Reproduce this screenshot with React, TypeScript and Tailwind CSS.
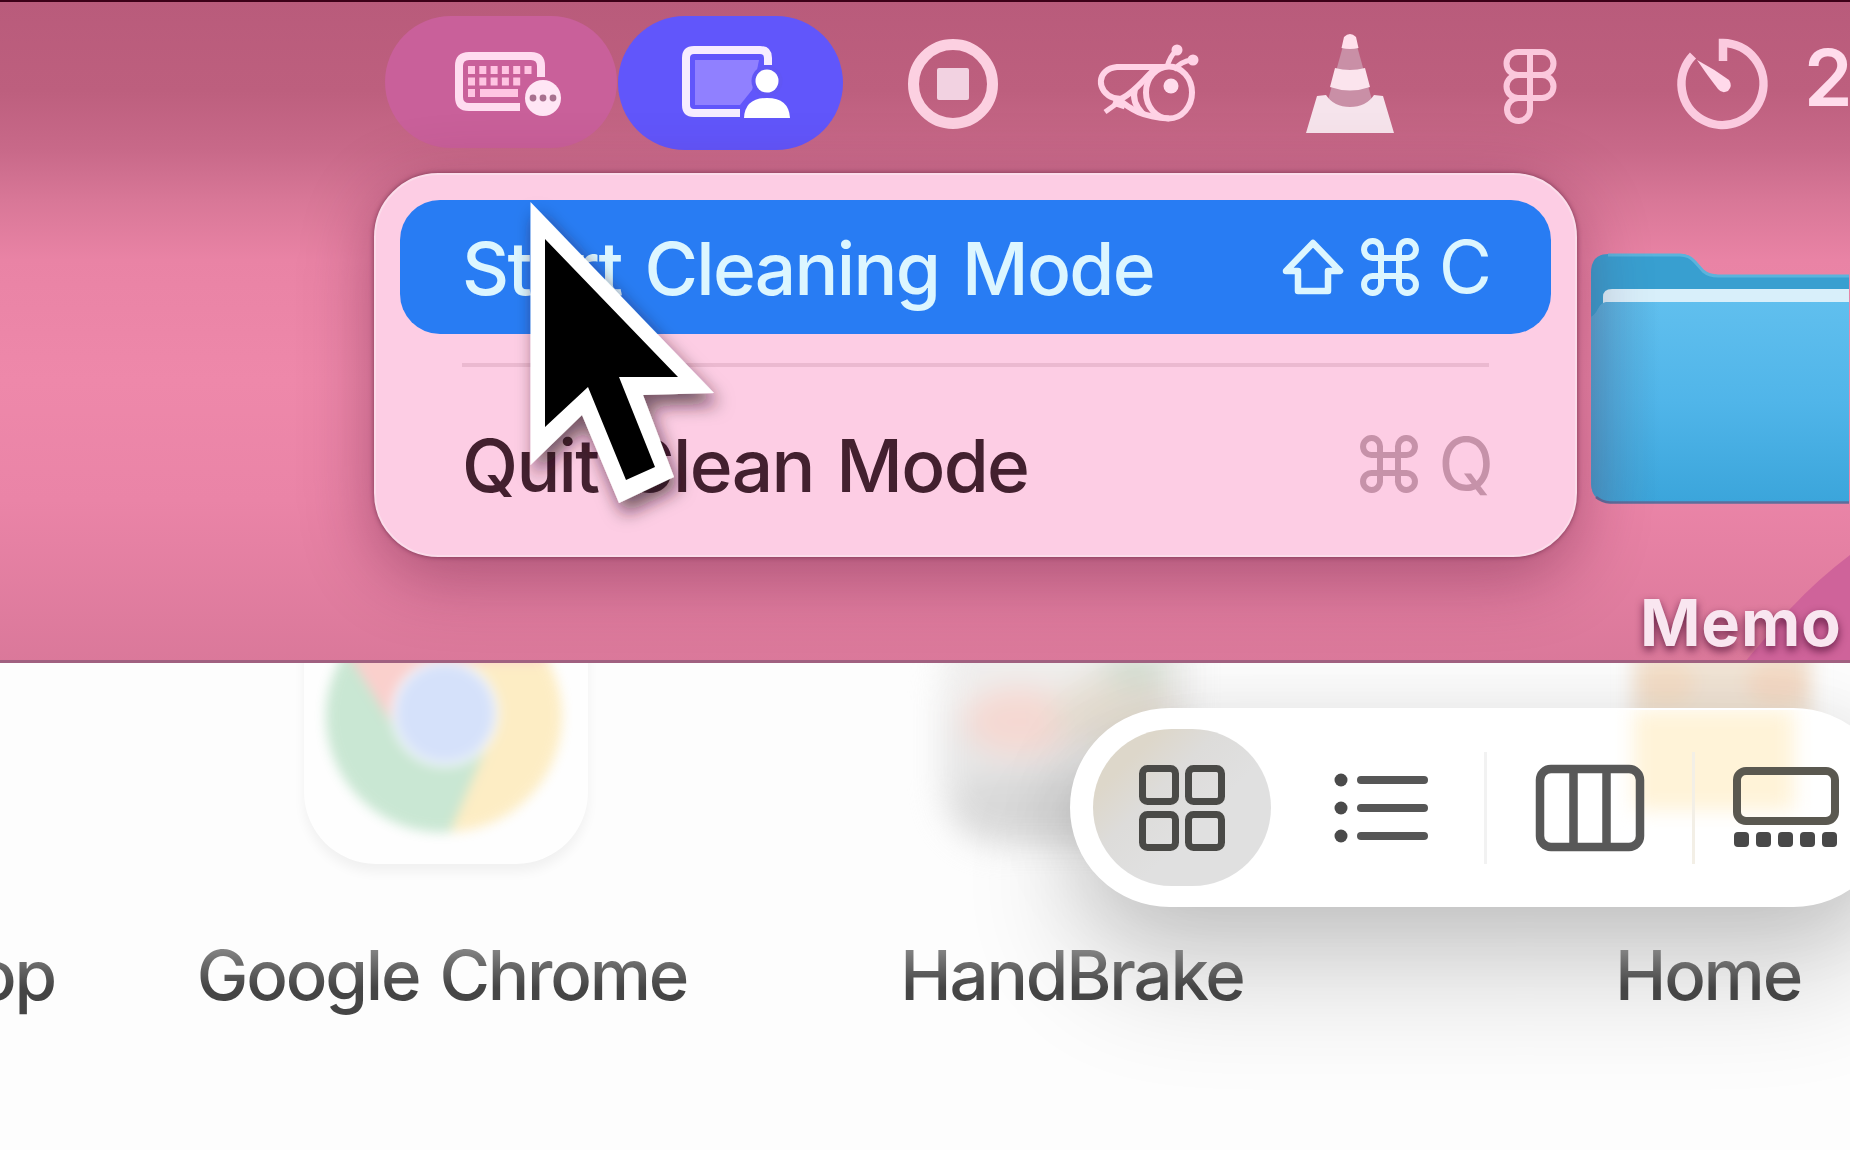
import React from 'react'
import type { ReactNode } from 'react'

function KeyboardIcon() {
  return (
    <svg width="110" height="70" viewBox="0 0 110 70" fill="none">
      <path
        d="M66 56 H15 Q5 56 5 46 V15 Q5 5 15 5 H77 Q87 5 87 15 V26"
        stroke="#ffdcf0"
        strokeWidth="8"
      />
      <g fill="#ffc4e2">
        {[0, 1, 2, 3, 4, 5].map((i) => (
          <rect key={i} x={14 + i * 11.3} y="15" width="7" height="8" />
        ))}
        {[0, 1, 2, 3, 4].map((i) => (
          <rect key={i} x={14 + i * 11.3} y="26.5" width="7" height="8" />
        ))}
        <rect x="14" y="38" width="7" height="8" />
        <rect x="26" y="38" width="38" height="8" />
      </g>
      <circle cx="89" cy="47" r="18" fill="#ffe6f5" />
      <g fill="#a8718f">
        <circle cx="79" cy="47" r="3.4" />
        <circle cx="89" cy="47" r="3.4" />
        <circle cx="99" cy="47" r="3.4" />
      </g>
    </svg>
  )
}

function ScreenShareIcon() {
  return (
    <svg width="112" height="78" viewBox="0 0 112 78" fill="none">
      <path
        d="M60 69 H14 Q6 69 6 61 V14 Q6 6 14 6 H80 Q88 6 88 14 V21"
        stroke="#f6ecff"
        strokeWidth="8"
      />
      <path d="M15 16 H79 L75 36 L72 46 L60 61 H15 Z" fill="#9080ff" />
      <circle cx="87" cy="37" r="15.5" fill="#6156f5" />
      <circle cx="87" cy="37" r="11.5" fill="#fff" />
      <path d="M64 74 Q65 54 87 54 Q109 54 110 74 Z" fill="#fff" />
    </svg>
  )
}

function RecordIcon() {
  return (
    <svg width="92" height="92" viewBox="0 0 92 92" fill="none">
      <circle cx="46" cy="46" r="39.5" stroke="#fcd0e1" strokeWidth="11" />
      <rect x="30" y="30" width="32" height="32" rx="2" fill="#f2d2e1" />
    </svg>
  )
}

function BeeIcon() {
  return (
    <svg width="106" height="84" viewBox="0 0 106 84" fill="none" stroke="#ffd3e6" strokeWidth="6">
      <ellipse cx="72" cy="50.500" rx="23" ry="26" />
      <path d="M68 25 H20 C-1 27 -1 50 17 56 L24 57 C38 50 46 38 57 28" strokeLinejoin="round" />
      <path d="M20 56 C34 68 46 75 72 76.500" />
      <path d="M8 70 L22 60" strokeWidth="5" />
      <path d="M16 60 L28 64" strokeWidth="7" />
      <path d="M38 47 C35 57 40 66 46 72" />
      <path d="M70 25 Q73 14 79 9 M77 28 Q84 19 95 18" strokeWidth="5" />
      <circle cx="80" cy="8" r="5.5" fill="#ffd3e6" stroke="none" />
      <circle cx="96" cy="18" r="5.5" fill="#ffd3e6" stroke="none" />
      <circle cx="74" cy="44" r="7.5" fill="#ffdcec" stroke="none" />
    </svg>
  )
}

function ConeIcon() {
  return (
    <svg width="90" height="104" viewBox="0 0 90 104">
      <path d="M38 14 L52 14 L67 68 Q45 86 23 68 Z" fill="#c98fa6" />
      <path d="M36.500 16 L39 5 Q45 -1 51 5 L53.500 16 Q45 18 36.500 16 Z" fill="#ffe0ec" />
      <path d="M30 36 Q45 40 60 36 L65 55 Q45 62 25 55 Z" fill="#fbe4ed" />
      <path d="M12 64 L21 63 Q29 75 45 75 Q61 75 69 63 L78 64 L89 101 H1 Z" fill="#f6e4ec" />
    </svg>
  )
}

function FigmaIcon() {
  return (
    <svg width="56" height="78" viewBox="0 0 56 78" fill="none" stroke="#fbc8dc" strokeWidth="6">
      <path d="M28 5 H16 A11 11 0 0 0 16 28 H28 M28 28 H16 A11 11 0 0 0 16 51 H28 M28 51 H16 A11.500 11.500 0 1 0 28 62 V5 H40 A11 11 0 0 1 40 28 H28 M40 28 A11 11 0 0 1 40 51 H28" />
    </svg>
  )
}

function TimerIcon() {
  return (
    <svg width="94" height="94" viewBox="0 0 94 94" fill="none">
      <path d="M47 24 V6 A41 41 0 1 1 17 18.500" stroke="#fbcadf" strokeWidth="8.500" />
      <path d="M21 23 Q38 32 53 43 Q57 49 52 54 Q46 57 42 52 Q31 38 21 23 Z" fill="#ffd9ea" />
    </svg>
  )
}

function ShiftIcon() {
  return (
    <svg width="64" height="58" viewBox="0 0 64 58" fill="none">
      <path
        d="M32 5 L59 33 H47 V53 H17 V33 H5 Z"
        stroke="currentColor"
        strokeWidth="6.5"
        strokeLinejoin="round"
      />
    </svg>
  )
}

function CommandIcon() {
  return (
    <svg width="58" height="58" viewBox="0 0 58 58" fill="none">
      <path
        d="M20 20 V12.500 A8.500 8.500 0 1 0 12.500 20 H45.500 A8.500 8.500 0 1 0 38 12.500 V45.500 A8.500 8.500 0 1 0 45.500 38 H12.500 A8.500 8.500 0 1 0 20 45.500 Z"
        stroke="currentColor"
        strokeWidth="6"
      />
    </svg>
  )
}

function FolderIcon() {
  return (
    <svg width="259" height="256" viewBox="0 0 259 256">
      <defs>
        <linearGradient id="folder-front" x1="0" y1="0" x2="0" y2="1">
          <stop offset="0" stopColor="#60bfee" />
          <stop offset="0.5" stopColor="#50b5e9" />
          <stop offset="1" stopColor="#3ba5db" />
        </linearGradient>
        <linearGradient id="folder-side" x1="0" y1="0" x2="1" y2="0">
          <stop offset="0" stopColor="#4a94bf" stopOpacity="0.5" />
          <stop offset="1" stopColor="#4a94bf" stopOpacity="0" />
        </linearGradient>
      </defs>
      <path d="M1 66 V22 Q1 3 18 3 H90 Q99 3 105 10 L113 19 Q119 24 128 24 H259 V66 Z" fill="#389fd0" />
      <path d="M18 4 H90 Q99 4 105 11 L113 20 Q119 25 128 25 H259" fill="none" stroke="#5bb3dc" strokeWidth="3" />
      <path d="M13 56 V46 Q13 38 22 38 H259 V56 Z" fill="#d8effa" />
      <path d="M16 51 H259 V251 H20 Q2 251 1 233 V66 Q5 64 8 58 Q11 52 16 51 Z" fill="url(#folder-front)" />
      <path d="M16 51 H70 V251 H20 Q2 251 1 233 V66 Q5 64 8 58 Q11 52 16 51 Z" fill="url(#folder-side)" />
      <path d="M6 246 Q12 251 20 251.500 H259" fill="none" stroke="#5c6d9c" strokeWidth="2.500" />
    </svg>
  )
}

function ChromeIcon() {
  return (
    <svg width="240" height="240" viewBox="0 0 240 240" className="opacity-25 blur-[6px]">
      <circle cx="120" cy="120" r="116" fill="#fbbc1c" />
      <path d="M20 55 A116 116 0 0 1 222 66 H119 L80 150 Z" fill="#f2493d" />
      <path d="M20 55 L80 150 L165 140 L124 236 A116 116 0 0 1 20 55 Z" fill="#2fa455" />
      <circle cx="119" cy="117" r="54" fill="#dfe8fa" />
      <circle cx="119" cy="117" r="49" fill="#5f8ef0" />
    </svg>
  )
}

function HandBrakeIcon() {
  return (
    <svg width="300" height="260" viewBox="0 0 300 260" className="-mt-7 overflow-visible opacity-80 blur-[15px]">
      <rect x="18" y="0" width="250" height="212" rx="60" fill="#e2e2e2" />
      <rect x="22" y="0" width="250" height="85" fill="#ecebea" />
      <ellipse cx="98" cy="86" rx="56" ry="34" fill="#f4d0c8" />
      <ellipse cx="190" cy="76" rx="60" ry="36" fill="#e2d9cb" />
      <ellipse cx="214" cy="34" rx="34" ry="16" fill="#c6d4c4" />
      <rect x="35" y="140" width="215" height="62" rx="30" fill="#d2d2d2" />
    </svg>
  )
}

function HomeIcon() {
  return (
    <svg width="260" height="60" viewBox="0 0 260 60" className="ml-7 overflow-visible blur-[9px]">
      <rect x="40" y="-30" width="180" height="100" fill="#f2e5d6" />
      <ellipse cx="75" cy="20" rx="28" ry="22" fill="#f5dfc8" />
      <ellipse cx="185" cy="20" rx="30" ry="22" fill="#f5dbc6" />
    </svg>
  )
}

function GridViewIcon() {
  return (
    <svg width="88" height="88" viewBox="0 0 88 88" fill="none" stroke="#4a4a47" strokeWidth="7">
      <rect x="4.500" y="4.500" width="33" height="33" rx="5" />
      <rect x="50.500" y="4.500" width="33" height="33" rx="5" />
      <rect x="4.500" y="50.500" width="33" height="33" rx="5" />
      <rect x="50.500" y="50.500" width="33" height="33" rx="5" />
    </svg>
  )
}

function ListViewIcon() {
  return (
    <svg width="98" height="72" viewBox="0 0 98 72" stroke="#565656" strokeWidth="8" strokeLinecap="round">
      {[8, 36, 64].map((y) => (
        <g key={y}>
          <circle cx="8" cy={y} r="6.5" fill="#4a4a4a" stroke="none" />
          <path d={`M28 ${y} H91`} />
        </g>
      ))}
    </svg>
  )
}

function ColumnViewIcon() {
  return (
    <svg width="110" height="88" viewBox="0 0 110 88" fill="none" stroke="#585858" strokeWidth="8.5">
      <rect x="5" y="5" width="100" height="78" rx="11" />
      <path d="M38.500 5 V83 M71.500 5 V83" />
    </svg>
  )
}

function GalleryViewIcon() {
  return (
    <svg width="108" height="84" viewBox="0 0 108 84" fill="none">
      <rect x="5" y="5" width="98" height="50" rx="9" stroke="#5a5850" strokeWidth="8" />
      <g fill="#484848">
        {[2, 24, 46, 68, 90].map((x) => (
          <rect key={x} x={x} y="66" width="15" height="15" rx="4" />
        ))}
      </g>
    </svg>
  )
}

function Cursor() {
  return (
    <svg width="240" height="350" viewBox="0 0 240 350" className="absolute left-[500px] top-[190px] z-20">
      <defs>
        <filter id="cursor-shadow" x="-20%" y="-20%" width="150%" height="150%">
          <feDropShadow dx="5" dy="11" stdDeviation="9" floodColor="#2a0a1a" floodOpacity="0.65" />
        </filter>
      </defs>
      <path
        d="M30.500 12 L214 203 L143 205 L174 287 L119 313 L82 225 L30.500 275 Z"
        fill="#fff"
        filter="url(#cursor-shadow)"
      />
      <path d="M45 49 L178 187 L119 187 L155 277 L126 290 L88 197 L45 237 Z" fill="#000" />
    </svg>
  )
}

type MenuRowProps = {
  label: string
  shortcut: ReactNode
}

function MenuRow({ label, shortcut }: MenuRowProps) {
  return (
    <>
      <span className="pt-[3px] font-medium tracking-[-1.7px] [word-spacing:5px] whitespace-nowrap">{label}</span>
      <span className="flex items-center">{shortcut}</span>
    </>
  )
}

function MenuBar() {
  return (
    <div className="flex h-[166px] items-center border-t-2 border-[#3d0018] pl-[385px]">
      <div className="-mt-1 flex h-[132px] w-[232px] shrink-0 items-center justify-center rounded-full bg-[#c9609a] pt-2 pl-4">
        <KeyboardIcon />
      </div>
      <div className="-mt-[3px] ml-px flex h-[134px] w-[225px] shrink-0 items-center justify-center rounded-full bg-[#6156fb] pl-[10px]">
        <ScreenShareIcon />
      </div>
      <div className="ml-[64px] shrink-0">
        <RecordIcon />
      </div>
      <div className="ml-[98px] shrink-0">
        <BeeIcon />
      </div>
      <div className="ml-[102px] shrink-0">
        <ConeIcon />
      </div>
      <div className="ml-[107px] shrink-0 pt-1">
        <FigmaIcon />
      </div>
      <div className="ml-[118px] shrink-0">
        <TimerIcon />
      </div>
      <span className="ml-[34px] -mt-[13px] text-[78px] leading-none font-semibold text-[#ffdcec]">2</span>
    </div>
  )
}

function StatusMenu() {
  return (
    <div className="absolute left-[374px] top-[173px] z-10 h-[384px] w-[1203px] rounded-[64px] border-2 border-[#fbdcea] bg-[#fdcde4] px-6 pt-[25px] shadow-[0_0_5px_rgba(80,20,50,0.6),0_18px_70px_rgba(90,20,55,0.44)]">
      <div className="flex h-[134px] items-center justify-between rounded-[40px] bg-[#287cf3] pr-[59px] pl-[62px] text-[73px] text-[#dcf6ff]">
        <MenuRow
          label="Start Cleaning Mode"
          shortcut={
            <>
              <ShiftIcon />
              <span className="ml-4"><CommandIcon /></span>
              <span className="ml-5">C</span>
            </>
          }
        />
      </div>
      <div className="mx-[62px] mt-[29px] h-[4px] bg-[#ebb9d0]" />
      <div className="mt-[30px] flex h-[134px] items-center justify-between pr-[57px] pl-[62px] text-[73px] text-[#43202f]">
        <MenuRow
          label="Quit Clean Mode"
          shortcut={
            <span className="flex items-center text-[#c692a9]">
              <CommandIcon />
              <span className="ml-5">Q</span>
            </span>
          }
        />
      </div>
    </div>
  )
}

function Desktop() {
  return (
    <section className="relative h-[663px] overflow-hidden bg-[linear-gradient(180deg,#b95b7b_0px,#bd5f7e_90px,#c86989_150px,#d87797_200px,#e983a5_260px,#ee88aa_380px,#ea84a7_500px,#da789a_663px)]">
      <MenuBar />
      <StatusMenu />
      {/* purple swoosh of the wallpaper */}
      <svg width="110" height="120" viewBox="0 0 110 120" className="absolute right-0 bottom-0">
        <path d="M110 12 Q78 36 50 66 L4 120 H110 Z" fill="#cf639a" />
      </svg>
      <div className="absolute left-[1590px] top-[251px] flex w-[300px] flex-col">
        <FolderIcon />
        <span className="mt-[77px] ml-[50px] text-[65px] leading-[78px] font-bold tracking-[0.8px] text-[#f9e6f0] [text-shadow:0_4px_8px_rgba(70,10,45,0.75)]">
          Memo
        </span>
      </div>
      <div className="absolute inset-x-0 bottom-0 h-[3px] bg-[#a06080]" />
      <Cursor />
    </section>
  )
}

function AppItem({ icon, label }: { icon: ReactNode; label: string }) {
  return (
    <div className="flex w-[630px] shrink-0 flex-col items-center">
      <div className="flex h-[270px] w-full items-start justify-center">{icon}</div>
      <AppLabel>{label}</AppLabel>
    </div>
  )
}

function AppLabel({ children }: { children: ReactNode }) {
  return (
    <span className="z-10 bg-gradient-to-b from-[#8a8a8a] from-15% to-[#454545] to-65% bg-clip-text text-[69px] leading-[84px] font-medium tracking-[-2.2px] [word-spacing:4px] whitespace-nowrap text-transparent">
      {children}
    </span>
  )
}

function ViewSwitcher() {
  return (
    <div className="absolute left-[1070px] top-[45px] flex h-[199px] w-[823px] items-center rounded-full border-2 border-white bg-white pl-[21px] shadow-[0_75px_115px_rgba(0,0,0,0.16),0_10px_80px_rgba(0,0,0,0.12)]">
      {/* tint of the icon behind the glass */}
      <div className="absolute inset-0 overflow-hidden rounded-full">
        <div className="ml-[562px] h-[100px] w-[160px] bg-[#fff3d8] blur-[10px]" />
      </div>
      <div className="relative flex h-[157px] w-[178px] items-center justify-center rounded-full bg-[linear-gradient(135deg,#ddd7ca_20%,#dddcda_38%,#e0e0e0_60%)]">
        <GridViewIcon />
      </div>
      <div className="relative ml-[62px]">
        <ListViewIcon />
      </div>
      <div className="relative ml-[53px] h-[112px] w-[3px] bg-[#f2f2f2]" />
      <div className="relative ml-[48px]">
        <ColumnViewIcon />
      </div>
      <div className="relative ml-[47px] h-[112px] w-[3px] bg-[#f3efe6]" />
      <div className="relative ml-[37px]">
        <GalleryViewIcon />
      </div>
    </div>
  )
}

function FinderWindow() {
  return (
    <section className="relative h-[487px] overflow-hidden bg-[#fdfdfd]">
      <div className="flex">
        <div className="flex w-[127px] shrink-0 flex-col items-start">
          <div className="h-[270px]" />
          <span className="-ml-[25px]">
            <AppLabel>op</AppLabel>
          </span>
        </div>
        <AppItem
          label="Google Chrome"
          icon={
            <div className="-mt-[95px] ml-2 flex h-[296px] w-[284px] items-center justify-center rounded-[72px] bg-[#fefefe] shadow-[0_8px_12px_rgba(0,0,0,0.05)]">
              <ChromeIcon />
            </div>
          }
        />
        <AppItem label="HandBrake" icon={<HandBrakeIcon />} />
        <div className="ml-[6px]">
          <AppItem label="Home" icon={<HomeIcon />} />
        </div>
      </div>
      <ViewSwitcher />
    </section>
  )
}

export default function App() {
  return (
    <main className="h-[1150px] w-[1850px] overflow-hidden font-['Inter','Liberation_Sans',sans-serif]">
      <Desktop />
      <FinderWindow />
    </main>
  )
}
